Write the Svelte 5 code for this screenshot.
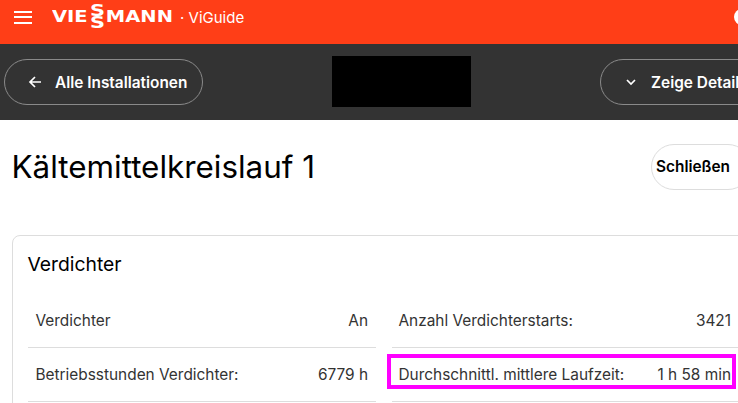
<script>
	const rows = [
		[
			{ label: 'Verdichter', value: 'An' },
			{ label: 'Anzahl Verdichterstarts:', value: '3421' }
		],
		[
			{ label: 'Betriebsstunden Verdichter:', value: '6779 h' },
			{ label: 'Durchschnittl. mittlere Laufzeit:', value: '1 h 58 min', marked: true }
		]
	];
</script>

<div class="page">
	<header class="topbar">
		<button class="menu" aria-label="Menü">
			<span></span><span></span><span></span>
		</button>
		<div class="logo">
			<div class="logo-inner">
				<span class="word">VIE</span>
				<span class="double-s"><i>S</i><i>S</i></span>
				<span class="word">MANN</span>
			</div>
		</div>
		<span class="product">· ViGuide</span>
		<span class="avatar"></span>
	</header>

	<nav class="subbar">
		<button class="pill">
			<svg width="16" height="16" viewBox="0 0 16 16" fill="none" stroke="currentColor" stroke-width="1.7">
				<path d="M14 8H3M8 3 3 8l5 5" />
			</svg>
			Alle Installationen
		</button>
		<div class="redacted"></div>
		<button class="pill details">
			<svg width="16" height="16" viewBox="0 0 16 16" fill="none" stroke="currentColor" stroke-width="1.7">
				<path d="M4 6l4 4 4-4" />
			</svg>
			Zeige Details
		</button>
	</nav>

	<main class="content">
		<div class="title-row">
			<h1>Kältemittelkreislauf 1</h1>
			<button class="close">Schließen</button>
		</div>

		<section class="card">
			<h2>Verdichter</h2>
			<div class="grid">
				{#each rows as row}
					{#each row as cell}
						<div class="cell" class:marked={cell.marked}>
							<span>{cell.label}</span>
							<span>{cell.value}</span>
						</div>
					{/each}
				{/each}
			</div>
		</section>
	</main>
</div>

<style>
	:global(body) {
		margin: 0;
		overflow: hidden;
		background: #fff;
	}

	.page {
		width: 738px;
		height: 403px;
		overflow: hidden;
		font-family: Inter, "Liberation Sans", sans-serif;
		color: #000;
	}

	button {
		font-family: inherit;
		background: none;
		cursor: pointer;
	}

	.topbar {
		display: flex;
		align-items: center;
		height: 44px;
		background: #ff3e17;
		color: #fff;
		box-sizing: border-box;
		padding: 0 0 10px 14px;
		position: relative;
	}

	.menu {
		display: flex;
		flex-direction: column;
		gap: 3.5px;
		width: 18px;
		padding: 0;
		border: 0;
	}

	.menu span {
		display: block;
		height: 2px;
		background: #fff;
	}

	.logo {
		width: 120px;
		margin-left: 20px;
		flex: none;
	}

	.logo-inner {
		display: flex;
		align-items: center;
		width: 90px;
		transform: scaleX(1.3);
		transform-origin: left center;
		font-family: "DejaVu Sans", sans-serif;
		font-weight: 700;
		font-size: 15px;
		line-height: 1;
	}

	.double-s {
		display: flex;
		flex-direction: column;
		align-items: center;
		width: 11px;
		margin: 0 1px 0 2px;
		font-size: 16px;
		line-height: 12.5px;
	}

	.double-s i {
		font-style: normal;
	}

	.product {
		margin-left: 8px;
		font-size: 15px;
		white-space: nowrap;
	}

	.avatar {
		position: absolute;
		left: 734px;
		top: 9px;
		width: 16px;
		height: 16px;
		border-radius: 50%;
		background: #fff;
	}

	.subbar {
		display: grid;
		grid-template-columns: 199px 139px 300px;
		column-gap: 129px;
		align-items: center;
		height: 76px;
		padding-left: 4px;
		background: #333;
		box-sizing: border-box;
	}

	.pill {
		display: flex;
		align-items: center;
		gap: 12px;
		height: 46px;
		padding: 0 0 0 22px;
		border: 1px solid #8a8a8a;
		border-radius: 23px;
		color: #fff;
		font-size: 15.4px;
		font-weight: 600;
		white-space: nowrap;
		box-sizing: border-box;
	}

	.redacted {
		height: 51px;
		margin-top: -1px;
		background: #000;
	}

	.content {
		padding: 0 0 0 12px;
	}

	.title-row {
		display: flex;
		justify-content: space-between;
		align-items: center;
		height: 45px;
		margin-top: 24px;
	}

	h1 {
		margin: 0 0 0 -0.5px;
		font-size: 31.4px;
		font-weight: 400;
		white-space: nowrap;
	}

	.close {
		width: 100px;
		height: 46px;
		margin-right: -13px;
		padding: 0 0 0 4px;
		text-align: left;
		border: 1px solid #ddd;
		border-radius: 23px;
		color: #000;
		font-size: 15.4px;
		font-weight: 600;
	}

	.card {
		width: 760px;
		height: 200px;
		margin-top: 46px;
		padding: 15px 15px 0;
		border: 1px solid #ddd;
		border-radius: 8px;
		box-sizing: border-box;
	}

	h2 {
		margin: 0 0 0 -0.5px;
		font-size: 19.3px;
		font-weight: 400;
		line-height: 26px;
	}

	.grid {
		display: grid;
		grid-template-columns: 348px 348px;
		column-gap: 16px;
		margin-top: 17px;
	}

	.cell {
		display: flex;
		justify-content: space-between;
		align-items: center;
		height: 54px;
		padding: 0 8px 0 7.5px;
		border-bottom: 1px solid #ddd;
		box-sizing: border-box;
		font-size: 15.4px;
		color: #333;
		position: relative;
	}

	.cell:nth-child(even) {
		padding: 0 9px 0 6.5px;
	}

	.marked::after {
		content: '';
		position: absolute;
		left: -5px;
		right: 4px;
		top: 6px;
		height: 35px;
		box-sizing: border-box;
		border: 4px solid #f0f;
		pointer-events: none;
	}
</style>
